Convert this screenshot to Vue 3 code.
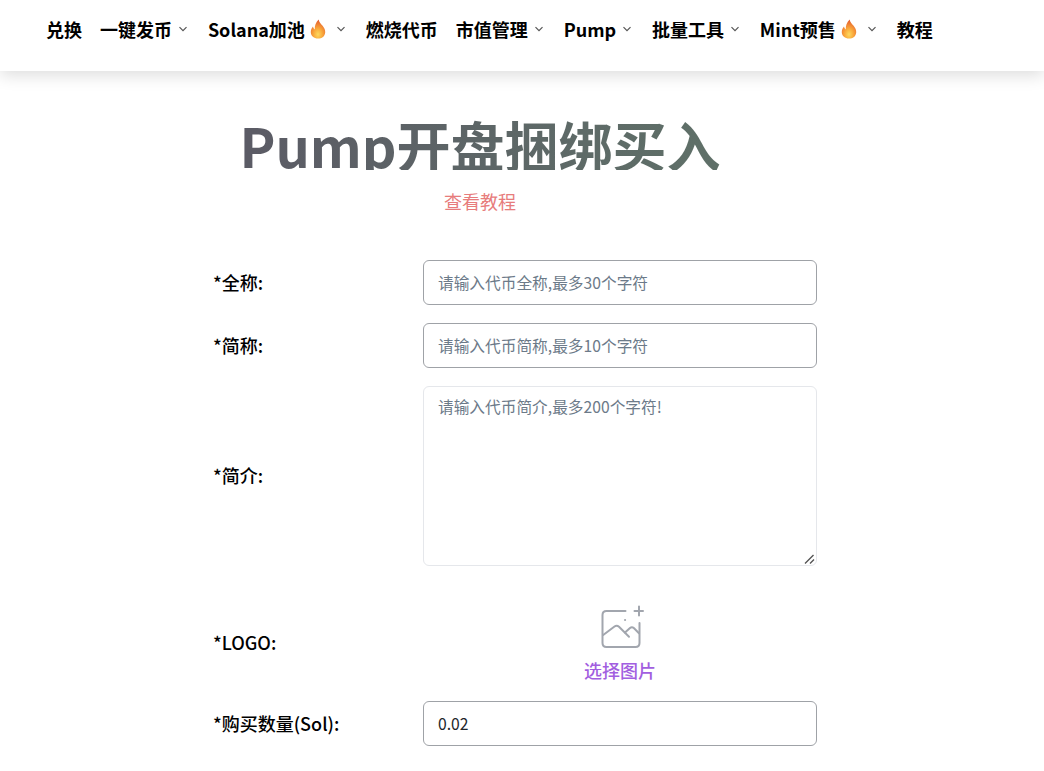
<template>
  <div class="page">
    <header class="nav">
      <template v-for="item in menu" :key="item.name">
        <a class="nav-item" :class="{ 'has-arrow': item.arrow, 'has-fire': item.fire }">
          <span>{{ item.name }}</span>
          <svg v-if="item.fire" class="fire" viewBox="0 0 16 20">
            <defs>
              <radialGradient id="flame" cx="0.5" cy="0.78" r="0.72">
                <stop offset="0" stop-color="#fdd95e" />
                <stop offset="0.45" stop-color="#f9a63a" />
                <stop offset="1" stop-color="#e5602f" />
              </radialGradient>
            </defs>
            <path fill="url(#flame)" d="M8.6 0.4C9.2 3.4 11 4.6 12.6 6.8C14.4 9.2 15.4 11 15.2 13.4C14.9 17.2 11.9 19.6 8 19.6C4 19.6 1 17.2 0.8 13.6C0.6 11 1.8 9 3 7.6C3.3 9 3.8 9.9 4.8 10.4C4.5 6.8 5.8 3 8.6 0.4Z" />
          </svg>
          <svg v-if="item.arrow" class="arrow" viewBox="0 0 10 10">
            <path d="M1.5 3.2L5 6.7L8.5 3.2" fill="none" stroke="#555" stroke-width="1.2" />
          </svg>
        </a>
      </template>
    </header>

    <main class="content">
      <div class="heading">
        <h1 class="title">Pump开盘捆绑买入</h1>
        <a class="guide">查看教程</a>
      </div>

      <form class="form">
        <div class="row">
          <label>*全称:</label>
          <input class="field" type="text" placeholder="请输入代币全称,最多30个字符" />
        </div>
        <div class="row">
          <label>*简称:</label>
          <input class="field" type="text" placeholder="请输入代币简称,最多10个字符" />
        </div>
        <div class="row tall-row">
          <label>*简介:</label>
          <div class="area-wrap">
            <textarea class="field area" placeholder="请输入代币简介,最多200个字符!"></textarea>
            <svg class="grip" viewBox="0 0 11 10" fill="none" stroke="#555" stroke-width="1.4">
              <path d="M1 9.5L9.5 1M6 9.5L10 5.5" />
            </svg>
          </div>
        </div>
        <div class="row tall-row logo-row">
          <label>*LOGO:</label>
          <div class="upload">
            <svg class="pic" viewBox="0 0 42 42" fill="none" stroke="#a2a6ae" stroke-width="2" stroke-linecap="round" stroke-linejoin="round">
              <path d="M24.5 5H5.5C3 5 1.5 6.5 1.5 9V37C1.5 39.5 3 41 5.5 41H34.5C37 41 38.5 39.5 38.5 37V17" />
              <path d="M2.2 29L13.5 20.5C15 19.5 16.5 19.5 18 20.8L28 30.7" />
              <path d="M24 26.5L29 22C30.2 21 31.6 21 32.8 22L38 27.3" />
              <path d="M38 0.5V9.5M33.5 5H42" />
              <path d="M24 14H24.1" />
            </svg>
            <span>选择图片</span>
          </div>
        </div>
        <div class="row">
          <label>*购买数量(Sol):</label>
          <input class="field" type="text" v-model="amount" />
        </div>
      </form>
    </main>
  </div>
</template>

<script setup>
import { ref } from 'vue';

const amount = ref('0.02');

const menu = [
  { name: '兑换' },
  { name: '一键发币', arrow: true },
  { name: 'Solana加池', arrow: true, fire: true },
  { name: '燃烧代币' },
  { name: '市值管理', arrow: true },
  { name: 'Pump', arrow: true },
  { name: '批量工具', arrow: true },
  { name: 'Mint预售', arrow: true, fire: true },
  { name: '教程' },
];
</script>

<style>
html,
body {
  overflow: hidden;
  background: #fff;
}
</style>

<style scoped>
.page {
  font-family: "Noto Sans CJK SC", "Noto Sans", sans-serif;
  color: #000;
  height: 771px;
  overflow: hidden;
}

.nav {
  display: flex;
  align-items: center;
  height: 71px;
  padding: 0 0 13px 46px;
  box-sizing: border-box;
  background: #fff;
  box-shadow: 0 4px 16px rgba(0, 0, 0, 0.14);
  font-size: 18px;
  font-weight: 700;
  line-height: 26px;
  gap: 18px;
}

.nav-item {
  display: flex;
  align-items: center;
  white-space: nowrap;
}

.fire {
  width: 16px;
  height: 20px;
  margin-left: 5px;
}

.arrow {
  width: 10px;
  height: 10px;
  margin: 0 1.9px 0 6px;
}

.has-fire .arrow {
  margin-left: 10px;
}

.heading {
  width: 960px;
  text-align: center;
  padding-top: 49px;
}

.title {
  display: inline-block;
  margin: 0;
  font-size: 54px;
  font-weight: 700;
  line-height: 50px;
  height: 50px;
  overflow: hidden;
  background: linear-gradient(90deg, #5b5b65 0%, #5f7068 100%);
  -webkit-background-clip: text;
  background-clip: text;
  color: transparent;
}

.guide {
  display: block;
  margin-top: 12px;
  font-size: 18px;
  line-height: 28px;
  color: #e77c7c;
}

.form {
  display: flex;
  flex-direction: column;
  gap: 18px;
  margin: 45px 0 0 213px;
  width: 604px;
}

.row {
  display: flex;
  align-items: center;
}

.row label {
  width: 210px;
  flex-shrink: 0;
  padding-bottom: 1px;
  font-size: 18px;
  font-weight: 500;
  color: #000;
}

.tall-row label {
  padding-bottom: 3px;
}

.field {
  width: 394px;
  height: 45px;
  box-sizing: border-box;
  padding: 0 14px 1px;
  border: 1px solid #9fa2a7;
  border-radius: 6px;
  background: #fff;
  font-family: inherit;
  font-size: 15.7px;
  color: #212529;
  outline: none;
}

.field::placeholder {
  color: #6c7a89;
  opacity: 1;
}

.area-wrap {
  position: relative;
  width: 394px;
  height: 180px;
}

.area {
  height: 180px;
  padding: 8px 14px;
  border-color: #e5e7eb;
  line-height: 24px;
  display: block;
  resize: none;
}

.grip {
  position: absolute;
  right: 2px;
  bottom: 2px;
  width: 11px;
  height: 10px;
}

.logo-row {
  margin-top: 19px;
}

.upload {
  width: 394px;
  padding-top: 3px;
  display: flex;
  flex-direction: column;
  align-items: center;
  color: #a25ee0;
  font-size: 18px;
  font-weight: 500;
  line-height: 25px;
}

.pic {
  width: 42px;
  height: 42px;
  margin-bottom: 10px;
  margin-left: 3px;
  overflow: visible;
}
</style>
